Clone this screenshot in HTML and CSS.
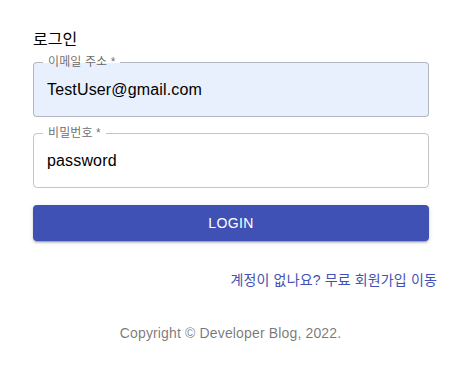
FILE: index.html
```html
<!DOCTYPE html>
<html lang="ko">
<head>
    <meta charset="UTF-8">
    <meta name="viewport" content="width=device-width, initial-scale=1.0">
    <title>로그인</title>
    <link rel="stylesheet" href="styles.css">
</head>
<body>
    <div class="login-container">
        <h1 class="login-title">로그인</h1>
        <form class="login-form">
            <div class="field field-filled">
                <label class="field-label" for="email">이메일 주소 *</label>
                <input class="field-input" type="text" id="email" value="TestUser@gmail.com">
            </div>
            <div class="field">
                <label class="field-label" for="password">비밀번호 *</label>
                <input class="field-input" type="text" id="password" value="password">
            </div>
            <button class="login-btn" type="button">Login</button>
        </form>
        <div class="signup-row">
            <a class="signup-link" href="#">계정이 없나요? 무료 회원가입 이동</a>
        </div>
        <p class="copyright">Copyright © Developer Blog, 2022.</p>
    </div>
</body>
</html>
```

FILE: styles.css
```css
body {
    margin: 0;
    padding: 0;
    background: #fff;
    font-family: "Liberation Sans", "Noto Sans CJK KR", sans-serif;
    color: rgba(0, 0, 0, 0.87);
}

.login-container {
    width: 396px;
    margin: 0 0 0 33px;
    padding-top: 28px;
}

.login-title {
    margin: 0;
    font-size: 16px;
    font-weight: 400;
    line-height: 24px;
    color: #000;
}

.login-form {
    display: flex;
    flex-direction: column;
    gap: 16px;
    margin-top: 10px;
}

.field {
    position: relative;
    height: 55px;
    border: 1px solid rgba(0, 0, 0, 0.23);
    border-radius: 4px;
    box-sizing: border-box;
}

.field-filled {
    background: #e8f0fe;
}

.field-label {
    position: absolute;
    top: -8px;
    left: 9px;
    padding: 0 5px;
    font-size: 12px;
    line-height: 14px;
    letter-spacing: 0.11px;
    color: rgba(0, 0, 0, 0.6);
    background: linear-gradient(#fff 0, #fff 8px, transparent 8px);
}

.field-input {
    width: 100%;
    height: 100%;
    box-sizing: border-box;
    border: none;
    outline: none;
    background: transparent;
    padding: 0 13px;
    font-family: inherit;
    font-size: 16px;
    letter-spacing: 0.15px;
    color: #000;
}

.login-btn {
    height: 36px;
    margin-top: 1px;
    border: none;
    border-radius: 4px;
    background-color: #3f51b5;
    color: #fff;
    font-family: inherit;
    font-size: 14px;
    font-weight: 400;
    letter-spacing: 0.4px;
    text-transform: uppercase;
    box-shadow: 0 3px 1px -2px rgba(0, 0, 0, 0.2), 0 2px 2px 0 rgba(0, 0, 0, 0.14), 0 1px 5px 0 rgba(0, 0, 0, 0.12);
    cursor: pointer;
}

.signup-row {
    display: flex;
    justify-content: flex-end;
    margin-right: -8px;
    margin-top: 29px;
}

.signup-link {
    font-size: 14px;
    line-height: 20px;
    letter-spacing: 0.15px;
    color: #3f51b5;
    text-decoration: none;
}

.copyright {
    margin: 33px 0 0 -33px;
    width: 461px;
    text-align: center;
    font-size: 14px;
    line-height: 20px;
    letter-spacing: 0.15px;
    color: rgba(0, 0, 0, 0.54);
}
```
